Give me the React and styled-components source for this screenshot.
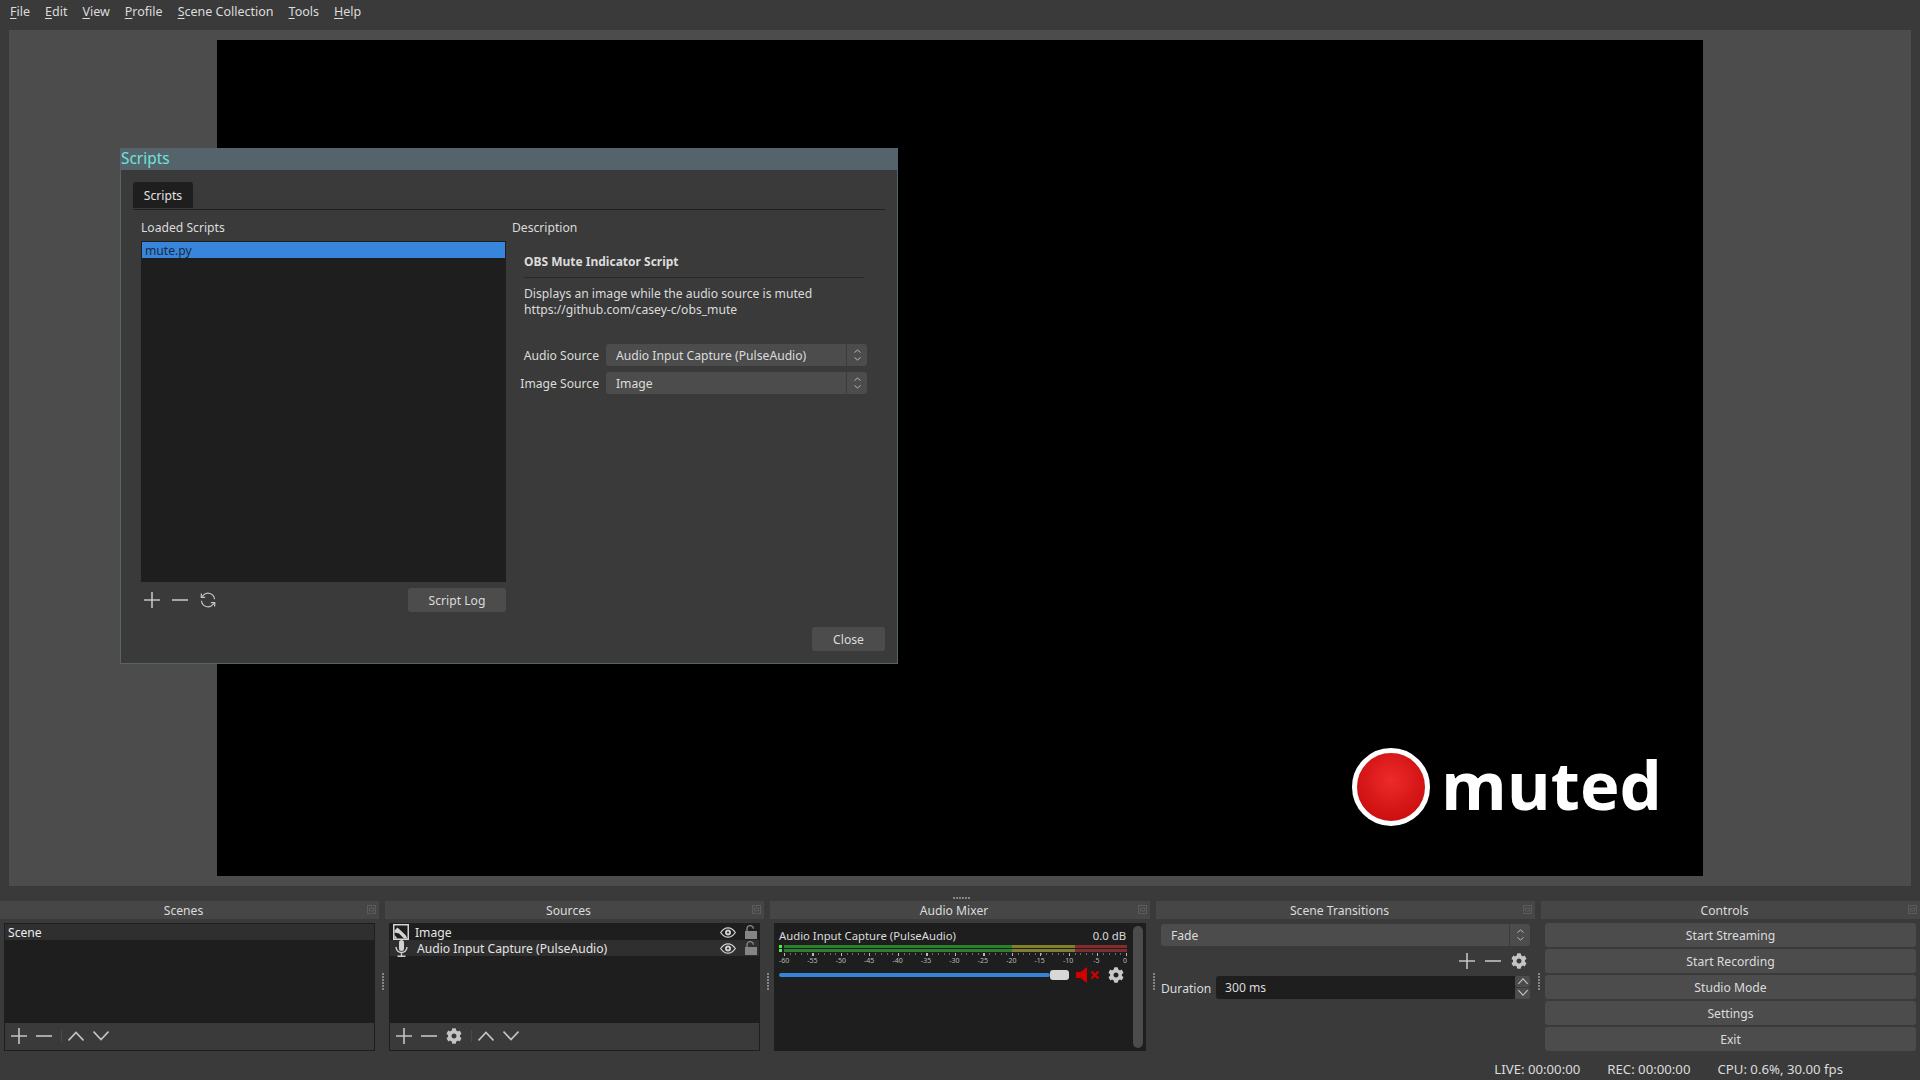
import React from "react";
import styled, { createGlobalStyle } from "styled-components";
import { FaCog } from "react-icons/fa";

const GlobalStyle = createGlobalStyle`
  html, body { margin: 0; padding: 0; background: #3a3a3a; }
  * { box-sizing: border-box; }
  body { font-family: "Noto Sans", "Open Sans", sans-serif; font-size: 12.15px; color: #dcdcdc; }
`;

const Plus = ({ size = 16 }) => (
  <svg width={size} height={size} viewBox="0 0 16 16"><path d="M8 0v16M0 8h16" stroke="#c4c4c4" strokeWidth="1.6" fill="none" /></svg>
);
const Minus = ({ size = 16 }) => (
  <svg width={size} height={size} viewBox="0 0 16 16"><path d="M0 8h16" stroke="#c4c4c4" strokeWidth="1.6" fill="none" /></svg>
);
const Up = () => (
  <svg width="16" height="16" viewBox="0 0 16 16"><path d="M0.5 12.5 8 4.5l7.5 8" stroke="#c4c4c4" strokeWidth="1.7" fill="none" /></svg>
);
const Down = () => (
  <svg width="16" height="16" viewBox="0 0 16 16"><path d="M0.5 3.5 8 11.5l7.5-8" stroke="#c4c4c4" strokeWidth="1.7" fill="none" /></svg>
);
const Refresh = () => (
  <svg width="16" height="16" viewBox="0 0 16 16" fill="none" stroke="#c4c4c4" strokeWidth="1.2">
    <path d="M14.5 7.2A6.5 6.5 0 0 0 3 3.6L1.5 5.2" />
    <path d="M1.3 1.6v3.8h3.8" />
    <path d="M1.5 8.8A6.5 6.5 0 0 0 13 12.4l1.5-1.6" />
    <path d="M14.7 14.4v-3.8h-3.8" />
  </svg>
);
const Eye = () => (
  <svg width="16" height="11" viewBox="0 0 16 11">
    <path d="M0.7 5.5C3 2 5.4 0.8 8 0.8s5 1.2 7.3 4.7C13 9 10.6 10.2 8 10.2S3 9 0.7 5.5Z" fill="none" stroke="#d0d0d0" strokeWidth="1.3" />
    <circle cx="8" cy="5.5" r="3" fill="#d0d0d0" />
    <circle cx="8" cy="5.5" r="1" fill="#1e1e1e" />
  </svg>
);
const Lock = () => (
  <svg width="12" height="14" viewBox="0 0 12 14">
    <path d="M2 6.5V3.8a3.2 3.2 0 0 1 6.4 0" fill="none" stroke="#858585" strokeWidth="1.4" />
    <rect x="0" y="6" width="12" height="8" fill="#858585" />
  </svg>
);
const ImageIcon = () => (
  <svg width="16" height="16" viewBox="0 0 16 16">
    <rect width="16" height="16" fill="#d4d4d4" />
    <rect x="1.5" y="1.5" width="13" height="13" fill="#1e1e1e" />
    <path d="M1.5 6.5 4.5 3.5l8 7.5 2 3.5H11L6 9.5 1.5 8.5Z" fill="#d4d4d4" />
    <path d="M1.5 14.5V11l3 3.5Z" fill="#d4d4d4" />
  </svg>
);
const MicIcon = () => (
  <svg width="13" height="17" viewBox="0 0 13 17" fill="none">
    <rect x="4" y="0" width="5" height="11" rx="2.5" fill="#d0d0d0" />
    <path d="M1 7a5.5 5.5 0 0 0 11 0M6.5 12.5v3.5M2.5 16.3h8" stroke="#d0d0d0" strokeWidth="1.4" />
  </svg>
);
const MutedSpeaker = () => (
  <svg width="24" height="16" viewBox="0 0 24 16">
    <path d="M0 5h4.5L11 0v16L4.5 11H0Z" fill="#d00000" />
    <path d="M15.5 4.5 22.5 11.5M22.5 4.5l-7 7" stroke="#d00000" strokeWidth="2.4" />
  </svg>
);
const FloatIcon = () => (
  <svg width="9" height="9" viewBox="0 0 9 9" fill="none" stroke="#707070" strokeWidth="1" strokeDasharray="1 1">
    <rect x="0.5" y="0.5" width="8" height="8" />
    <path d="M2.5 3h4v3h-4z" />
  </svg>
);
const UpDown = () => (
  <svg width="7" height="12" viewBox="0 0 7 12" fill="none" stroke="#c4c4c4" strokeWidth="0.9">
    <path d="M0.5 3.5 3.5 1l3 2.5M0.5 8.5l3 2.5 3-2.5" />
  </svg>
);

const Page = styled.div`
  position: relative;
  width: 1920px;
  height: 1080px;
  overflow: hidden;
  background: #3a3a3a;
  display: flex;
  flex-direction: column;
`;

const MenuBar = styled.div`
  height: 30px;
  padding: 3px 0 0 10px;
  display: flex;
  gap: 15px;
  font-size: 12.5px;
  line-height: 17px;
`;
const Mnemonic = styled.span`
  text-decoration: underline;
  text-underline-offset: 2px;
`;

const Preview = styled.div`
  height: 856px;
  margin: 0 9px;
  background: #4c4c4c;
  display: flex;
  align-items: center;
  justify-content: center;
`;
const Canvas = styled.div`
  position: relative;
  width: 1486px;
  height: 836px;
  background: #000;
`;
const MutedBadge = styled.div`
  position: absolute;
  left: 1135px;
  top: 708px;
  display: flex;
  align-items: center;
  gap: 11px;
`;
const RedDot = styled.div`
  width: 78px;
  height: 78px;
  border-radius: 50%;
  border: 5px solid #fff;
  background: radial-gradient(circle at 50% 40%, #ee2a2a, #cc0f0f 75%);
`;
const MutedText = styled.div`
  font-family: "Open Sans", sans-serif;
  font-weight: 700;
  font-size: 67px;
  line-height: 70px;
  color: #fff;
  margin-top: -7px;
`;

const HSplit = styled.div`
  height: 15px;
  display: flex;
  justify-content: center;
  align-items: center;
  & > div {
    width: 17px;
    height: 2px;
    margin: 9px 0 0 3px;
    background: repeating-linear-gradient(90deg, #858585 0 2px, transparent 2px 3px);
  }
`;

const DockRow = styled.div`
  height: 156px;
  display: flex;
`;
const VSplit = styled.div`
  width: 6px;
  flex: none;
  display: flex;
  align-items: center;
  justify-content: center;
  & > div {
    width: 2px;
    height: 17px;
    margin: 5px 0 0 1px;
    background: repeating-linear-gradient(180deg, #858585 0 2px, transparent 2px 3px);
  }
`;
const Dock = styled.div`
  width: ${(p) => p.$w || 379}px;
  flex: none;
  display: flex;
  flex-direction: column;
`;
const DockTitle = styled.div`
  position: relative;
  height: 18px;
  background: #464646;
  text-align: center;
  line-height: 19px;
  padding-right: 12px;
`;
const DockFloat = styled.div`
  position: absolute;
  right: 3px;
  top: 4px;
  display: flex;
`;
const DockBody = styled.div`
  padding: 4px;
  height: 136px;
  display: flex;
  flex-direction: column;
`;

const ListFrame = styled.div`
  height: 128px;
  border: 1px solid #1e1e1e;
  display: flex;
  flex-direction: column;
`;
const ListArea = styled.div`
  flex: 1;
  background: #1e1e1e;
`;
const SceneRow = styled.div`
  height: 16px;
  line-height: 17px;
  padding-left: 3px;
  background: #2f2f2f;
  color: #eee;
`;
const SourceRow = styled.div`
  height: 16px;
  line-height: 17px;
  display: flex;
  align-items: center;
  background: ${(p) => (p.$alt ? "#2f2f2f" : "transparent")};
  padding-left: ${(p) => (p.$alt ? 5 : 3)}px;
  color: #e4e4e4;
`;
const SourceName = styled.span`
  margin-left: ${(p) => (p.$alt ? 9 : 6)}px;
  flex: 1;
`;
const SourceFlags = styled.div`
  width: 37px;
  margin-right: 2px;
  display: flex;
  align-items: center;
  justify-content: space-between;
`;
const Toolbar = styled.div`
  height: 27px;
  padding: 0 0 1px 6px;
  display: flex;
  align-items: center;
  gap: 9px;
  color: #c4c4c4;
  font-size: 16px;
`;
const ToolSep = styled.div`
  width: 1px;
  height: 12px;
  margin-right: -3px;
  background: #4a4a4a;
`;

const MixerPanel = styled.div`
  position: relative;
  height: 128px;
  background: #1e1e1e;
  padding: 4px 0 0 5px;
`;
const MixerHead = styled.div`
  width: 347px;
  display: flex;
  justify-content: space-between;
  font-size: 11.3px;
  line-height: 17px;
`;
const Meter = styled.div`
  position: relative;
  width: 348px;
  height: 8px;
  margin-top: 1px;
  padding-left: 5px;
  display: flex;
  flex-direction: column;
  gap: 1px;
`;
const MeterChannel = styled.div`
  height: 3px;
  display: flex;
`;
const MeterSeg = styled.div`
  flex: ${(p) => p.$n};
  background: ${(p) => p.$c};
`;
const MeterPeak = styled.div`
  position: absolute;
  left: 0;
  top: 0;
  width: 3px;
  height: 7px;
  background: repeating-linear-gradient(180deg, #4eea4e 0 3px, #1e1e1e 3px 4px);
`;
const Ticks = styled.div`
  width: 343px;
  height: 3px;
  margin: 0 0 0 5px;
  background:
    repeating-linear-gradient(90deg, #b8b8b8 0 1px, transparent 1px 28.5px) 0 0 / 100% 3px no-repeat,
    repeating-linear-gradient(90deg, #6c6c6c 0 1px, transparent 1px 5.7px) 0 0 / 100% 2px no-repeat;
`;
const TickLabels = styled.div`
  width: 341px;
  margin-left: 5px;
  height: 9px;
  display: flex;
  justify-content: space-between;
`;
const TickLabel = styled.span`
  width: 0;
  display: flex;
  justify-content: center;
  font-size: 7px;
  line-height: 9px;
  color: #b8b8b8;
`;
const FaderRow = styled.div`
  width: 345px;
  height: 16px;
  margin-top: 2px;
  display: flex;
  align-items: center;
`;
const FaderTrack = styled.div`
  width: 272px;
  height: 4px;
  border-radius: 2px;
  background: #3584d9;
`;
const FaderKnob = styled.div`
  width: 19px;
  height: 10px;
  border-radius: 3px;
  background: #d8d8d8;
  margin-right: 7px;
`;
const GearBox = styled.div`
  display: flex;
  margin-left: 8px;
  font-size: 16px;
  color: #c8c8c8;
`;
const Scrollbar = styled.div`
  position: absolute;
  right: 3px;
  top: 3px;
  width: 10px;
  height: 122px;
  border-radius: 5px;
  background: #4c4c4c;
`;

const Combo = styled.div`
  width: ${(p) => (p.$w ? `${p.$w}px` : "100%")};
  flex: none;
  height: 22px;
  border-radius: 3px;
  background: #4c4c4c;
  display: flex;
  align-items: center;
  padding-left: 10px;
  line-height: 23px;
`;
const ComboText = styled.span`
  flex: 1;
`;
const ComboArrow = styled.span`
  width: 21px;
  height: 100%;
  border-left: 1px solid #3a3a3a;
  display: flex;
  align-items: center;
  justify-content: center;
`;

const TransBody = styled.div`
  padding: 5px 5px 0;
`;
const TransTools = styled.div`
  height: 26px;
  padding: 3px 3px 0 0;
  display: flex;
  align-items: center;
  justify-content: flex-end;
  gap: 10px;
  color: #c4c4c4;
  font-size: 16px;
`;
const DurationRow = styled.div`
  height: 24px;
  margin-top: 3px;
  display: flex;
  align-items: center;
`;
const DurationLabel = styled.span`
  width: 55px;
  flex: none;
  padding-top: 2px;
`;
const DurationInput = styled.div`
  flex: 1;
  height: 23px;
  border-radius: 3px 0 0 3px;
  background: #1e1e1e;
  padding-left: 9px;
  line-height: 23px;
`;
const Spin = styled.div`
  width: 15px;
  height: 23px;
  display: flex;
  flex-direction: column;
  gap: 1px;
`;
const SpinBtn = styled.div`
  flex: 1;
  background: #4c4c4c;
  border-radius: 2px;
  display: flex;
  align-items: center;
  justify-content: center;
  & svg { width: 12px; height: 10px; }
`;

const Controls = styled.div`
  padding: 4px;
  display: flex;
  flex-direction: column;
  gap: 2px;
`;
const Button = styled.div`
  height: 24px;
  width: ${(p) => (p.$w ? `${p.$w}px` : "auto")};
  border-radius: 3px;
  background: #4c4c4c;
  text-align: center;
  line-height: 25px;
  flex: none;
`;

const StatusBar = styled.div`
  height: 23px;
  padding-right: 77px;
  display: flex;
  justify-content: flex-end;
  align-items: center;
  gap: 27px;
  font-size: 13.2px;
`;

const Dialog = styled.div`
  position: absolute;
  left: 120px;
  top: 148px;
  width: 778px;
  height: 516px;
  display: flex;
  flex-direction: column;
  background: #3a3a3a;
`;
const DialogTitle = styled.div`
  height: 22px;
  background: #55636a;
  color: #6fe3dc;
  font-size: 15.4px;
  line-height: 21px;
  padding-left: 1px;
`;
const DialogBody = styled.div`
  flex: 1;
  min-height: 0;
  border: 1px solid #55636a;
  border-top: none;
  padding: 12px 12px 12px;
  display: flex;
  flex-direction: column;
`;
const TabBar = styled.div`
  height: 28px;
  border-bottom: 1px solid #1e1e1e;
`;
const Tab = styled.div`
  width: 60px;
  height: 26px;
  background: #1e1e1e;
  border-radius: 3px 3px 0 0;
  text-align: center;
  line-height: 27px;
  color: #e4e4e4;
`;
const Pane = styled.div`
  flex: 1;
  min-height: 0;
  padding: 9px 0 0 8px;
  display: flex;
  gap: 6px;
`;
const LeftCol = styled.div`
  width: 365px;
  flex: none;
  display: flex;
  flex-direction: column;
`;
const RightCol = styled.div`
  flex: 1;
  display: flex;
  flex-direction: column;
`;
const GroupLabel = styled.div`
  height: 17px;
  line-height: 17px;
`;
const ScriptList = styled.div`
  height: 341px;
  margin-top: 5px;
  border: 1px solid #1e1e1e;
  background: #1e1e1e;
`;
const ScriptRow = styled.div`
  height: 16px;
  line-height: 17px;
  padding-left: 3px;
  background: #3786dc;
  color: #1c2a3e;
`;
const ScriptTools = styled.div`
  margin-top: 6px;
  display: flex;
  align-items: center;
  padding-left: 3px;
  gap: 12px;
`;
const ToolSpacer = styled.div`
  flex: 1;
`;
const Description = styled.div`
  padding-left: 12px;
`;
const DescTitle = styled.div`
  margin-top: 18px;
  height: 16px;
  line-height: 16px;
  font-size: 12px;
  font-weight: 700;
`;
const DescRule = styled.div`
  width: 340px;
  height: 1px;
  margin-top: 7px;
  background: #282828;
`;
const DescText = styled.div`
  margin-top: 8px;
  line-height: 16px;
`;
const Form = styled.div`
  margin-top: 26px;
  display: flex;
  flex-direction: column;
  gap: 6px;
`;
const FormRow = styled.div`
  display: flex;
  align-items: center;
`;
const FormLabel = styled.span`
  width: 75px;
  margin-right: 7px;
  white-space: nowrap;
  direction: rtl;
  text-align: right;
`;
const DialogFoot = styled.div`
  display: flex;
  justify-content: flex-end;
`;

const Float = () => (
  <DockFloat><FloatIcon /></DockFloat>
);

const ticks = [-60, -55, -50, -45, -40, -35, -30, -25, -20, -15, -10, -5, 0];

const Channel = () => (
  <MeterChannel>
    <MeterSeg $n={228} $c="#2d7f2d" />
    <MeterSeg $n={63} $c="#7f7f2d" />
    <MeterSeg $n={52} $c="#7f2d2d" />
  </MeterChannel>
);

const App = () => {
  return (
    <Page>
      <GlobalStyle />
      <MenuBar>
        <span><Mnemonic>F</Mnemonic>ile</span>
        <span><Mnemonic>E</Mnemonic>dit</span>
        <span><Mnemonic>V</Mnemonic>iew</span>
        <span><Mnemonic>P</Mnemonic>rofile</span>
        <span><Mnemonic>S</Mnemonic>cene Collection</span>
        <span><Mnemonic>T</Mnemonic>ools</span>
        <span><Mnemonic>H</Mnemonic>elp</span>
      </MenuBar>
      <Preview>
        <Canvas>
          <MutedBadge>
            <RedDot />
            <MutedText>muted</MutedText>
          </MutedBadge>
        </Canvas>
      </Preview>
      <HSplit><div /></HSplit>
      <DockRow>
        <Dock>
          <DockTitle>Scenes<Float /></DockTitle>
          <DockBody>
            <ListFrame>
              <ListArea><SceneRow>Scene</SceneRow></ListArea>
              <Toolbar>
                <Plus /><Minus /><ToolSep /><Up /><Down />
              </Toolbar>
            </ListFrame>
          </DockBody>
        </Dock>
        <VSplit><div /></VSplit>
        <Dock>
          <DockTitle>Sources<Float /></DockTitle>
          <DockBody>
            <ListFrame>
              <ListArea>
                <SourceRow>
                  <ImageIcon />
                  <SourceName>Image</SourceName>
                  <SourceFlags><Eye /><Lock /></SourceFlags>
                </SourceRow>
                <SourceRow $alt>
                  <MicIcon />
                  <SourceName $alt>Audio Input Capture (PulseAudio)</SourceName>
                  <SourceFlags><Eye /><Lock /></SourceFlags>
                </SourceRow>
              </ListArea>
              <Toolbar>
                <Plus /><Minus /><FaCog /><ToolSep /><Up /><Down />
              </Toolbar>
            </ListFrame>
          </DockBody>
        </Dock>
        <VSplit><div /></VSplit>
        <Dock $w={380}>
          <DockTitle>Audio Mixer<Float /></DockTitle>
          <DockBody>
            <MixerPanel>
              <MixerHead>
                <span>Audio Input Capture (PulseAudio)</span>
                <span>0.0 dB</span>
              </MixerHead>
              <Meter>
                <MeterPeak />
                <Channel />
                <Channel />
              </Meter>
              <Ticks />
              <TickLabels>
                {ticks.map((t) => <TickLabel key={t}>{t}</TickLabel>)}
              </TickLabels>
              <FaderRow>
                <FaderTrack />
                <FaderKnob />
                <MutedSpeaker />
                <GearBox><FaCog /></GearBox>
              </FaderRow>
              <Scrollbar />
            </MixerPanel>
          </DockBody>
        </Dock>
        <VSplit><div /></VSplit>
        <Dock>
          <DockTitle>Scene Transitions<Float /></DockTitle>
          <TransBody>
            <Combo>
              <ComboText>Fade</ComboText>
              <ComboArrow><UpDown /></ComboArrow>
            </Combo>
            <TransTools>
              <Plus /><Minus /><FaCog />
            </TransTools>
            <DurationRow>
              <DurationLabel>Duration</DurationLabel>
              <DurationInput>300 ms</DurationInput>
              <Spin>
                <SpinBtn><Up /></SpinBtn>
                <SpinBtn><Down /></SpinBtn>
              </Spin>
            </DurationRow>
          </TransBody>
        </Dock>
        <VSplit><div /></VSplit>
        <Dock>
          <DockTitle>Controls<Float /></DockTitle>
          <Controls>
            <Button>Start Streaming</Button>
            <Button>Start Recording</Button>
            <Button>Studio Mode</Button>
            <Button>Settings</Button>
            <Button>Exit</Button>
          </Controls>
        </Dock>
      </DockRow>
      <StatusBar>
        <span>LIVE: 00:00:00</span>
        <span>REC: 00:00:00</span>
        <span>CPU: 0.6%, 30.00 fps</span>
      </StatusBar>

      <Dialog>
        <DialogTitle>Scripts</DialogTitle>
        <DialogBody>
          <TabBar><Tab>Scripts</Tab></TabBar>
          <Pane>
            <LeftCol>
              <GroupLabel>Loaded Scripts</GroupLabel>
              <ScriptList><ScriptRow>mute.py</ScriptRow></ScriptList>
              <ScriptTools>
                <Plus /><Minus /><Refresh />
                <ToolSpacer />
                <Button $w={98}>Script Log</Button>
              </ScriptTools>
            </LeftCol>
            <RightCol>
              <GroupLabel>Description</GroupLabel>
              <Description>
                <DescTitle>OBS Mute Indicator Script</DescTitle>
                <DescRule />
                <DescText>
                  Displays an image while the audio source is muted<br />
                  https://github.com/casey-c/obs_mute
                </DescText>
                <Form>
                  <FormRow>
                    <FormLabel>Audio Source</FormLabel>
                    <Combo $w={261}>
                      <ComboText>Audio Input Capture (PulseAudio)</ComboText>
                      <ComboArrow><UpDown /></ComboArrow>
                    </Combo>
                  </FormRow>
                  <FormRow>
                    <FormLabel>Image Source</FormLabel>
                    <Combo $w={261}>
                      <ComboText>Image</ComboText>
                      <ComboArrow><UpDown /></ComboArrow>
                    </Combo>
                  </FormRow>
                </Form>
              </Description>
            </RightCol>
          </Pane>
          <DialogFoot><Button $w={73}>Close</Button></DialogFoot>
        </DialogBody>
      </Dialog>
    </Page>
  );
};

export default App;
